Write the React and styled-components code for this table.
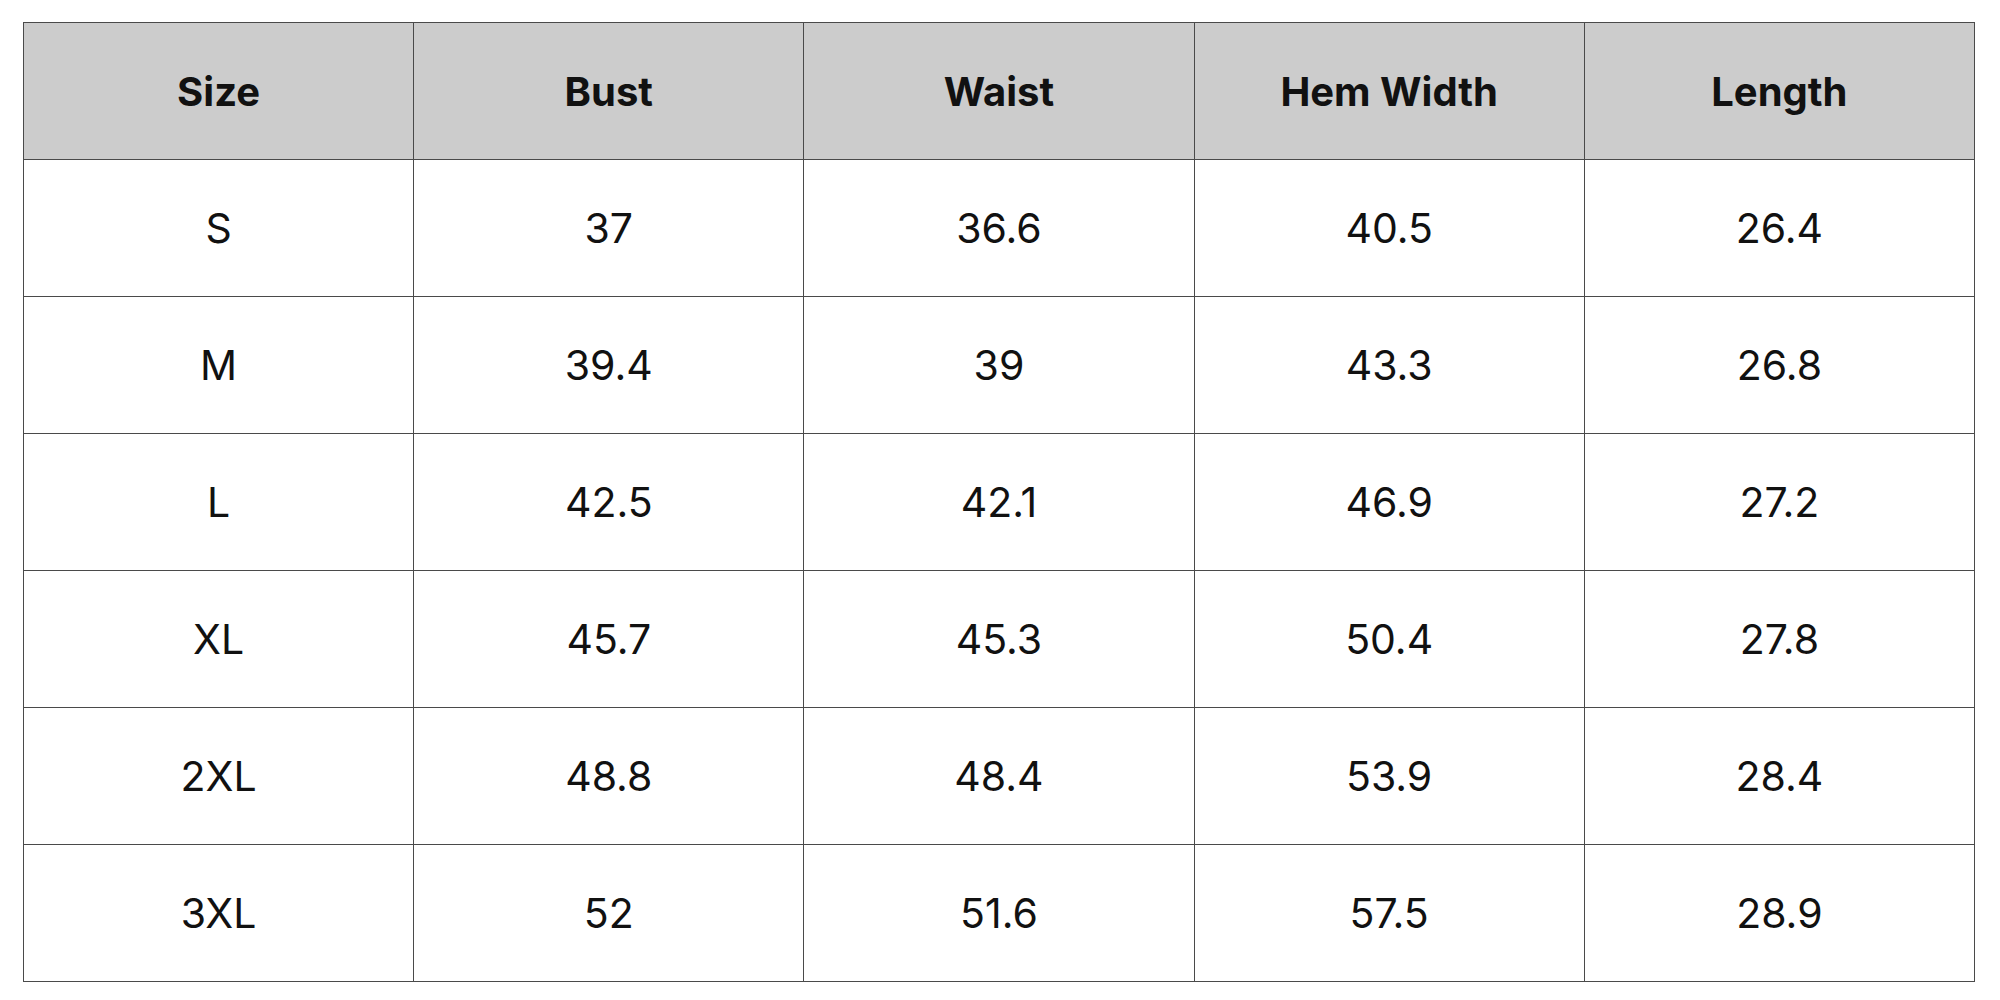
import styled, { createGlobalStyle } from 'styled-components';

const GlobalStyle = createGlobalStyle`
  html, body {
    margin: 0;
    padding: 0;
    background: #ffffff;
  }
  body {
    font-family: Inter, "Open Sans", "Liberation Sans", sans-serif;
    color: #111111;
  }
`;

const Page = styled.div`
  padding: 22px 25px 15px 23px;
`;

const Table = styled.table`
  width: 100%;
  border-collapse: collapse;
  table-layout: fixed;
  border: 1px solid #4a4a4a;
`;

const HeadCell = styled.th`
  height: 136px;
  background: #cccccc;
  border: 1px solid #4a4a4a;
  font-size: 40px;
  font-weight: 700;
  text-align: center;
  vertical-align: middle;
  padding: 0;
  color: #111111;
`;

const Cell = styled.td`
  height: 136px;
  border: 1px solid #4a4a4a;
  font-size: 41px;
  font-weight: 400;
  text-align: center;
  vertical-align: middle;
  padding: 0;
  color: #111111;
`;

const columns = ['Size', 'Bust', 'Waist', 'Hem Width', 'Length'];

const rows = [
  ['S', '37', '36.6', '40.5', '26.4'],
  ['M', '39.4', '39', '43.3', '26.8'],
  ['L', '42.5', '42.1', '46.9', '27.2'],
  ['XL', '45.7', '45.3', '50.4', '27.8'],
  ['2XL', '48.8', '48.4', '53.9', '28.4'],
  ['3XL', '52', '51.6', '57.5', '28.9'],
];

export default function App() {
  return (
    <>
      <GlobalStyle />
      <Page>
        <Table>
          <thead>
            <tr>
              {columns.map((c) => (
                <HeadCell key={c}>{c}</HeadCell>
              ))}
            </tr>
          </thead>
          <tbody>
            {rows.map((r) => (
              <tr key={r[0]}>
                {r.map((v, i) => (
                  <Cell key={i}>{v}</Cell>
                ))}
              </tr>
            ))}
          </tbody>
        </Table>
      </Page>
    </>
  );
}
